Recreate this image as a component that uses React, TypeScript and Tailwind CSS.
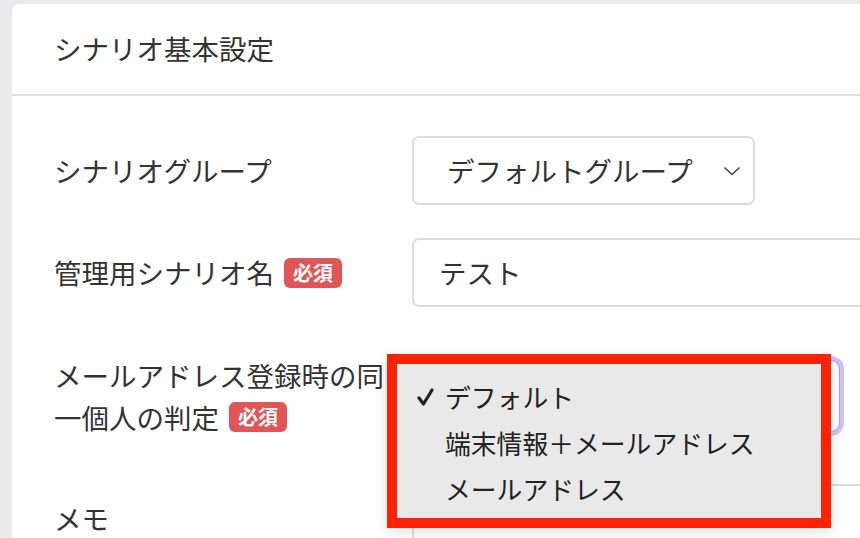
import React from "react";

const font = { fontFamily: '"Noto Sans CJK JP", "Noto Sans", sans-serif' };

function Badge() {
  return (
    <span className="ml-[10px] inline-flex h-[30px] items-center rounded-[6px] bg-[#e05555] px-[9px] text-[20px] font-bold leading-none text-white">
      必須
    </span>
  );
}

export default function App() {
  return (
    <div
      className="relative h-[538px] w-[860px] overflow-hidden bg-[#ebebee] pl-[12px] pt-[4px] text-[#333333]"
      style={font}
    >
      <div className="h-[620px] w-[900px] rounded-tl-[8px] bg-white">
        <div className="flex h-[92px] items-center border-b-2 border-[#dedee2] pl-[42px] text-[27.5px]">
          シナリオ基本設定
        </div>
        <div className="pl-[42px] pt-[40px]">
          {/* row 1 */}
          <div className="flex h-[69px] items-center">
            <div className="w-[358px] text-[27.5px]">シナリオグループ</div>
            <div className="flex h-[69px] w-[343px] items-center justify-between rounded-[7px] border-2 border-[#dcdce0] pl-[33px] pr-[12px] text-[27.5px]">
              <span>デフォルトグループ</span>
              <svg width="18" height="10" viewBox="0 0 18 10" fill="none">
                <path d="M1.5 1.5 L9 8.5 L16.5 1.5" stroke="#444" strokeWidth="1.6" />
              </svg>
            </div>
          </div>
          {/* row 2 */}
          <div className="mt-[33px] flex h-[69px] items-center">
            <div className="flex w-[358px] items-center text-[27.5px]">
              <span>管理用シナリオ名</span>
              <Badge />
            </div>
            <div className="flex h-[69px] w-[480px] items-center rounded-l-[7px] border-2 border-r-0 border-[#dcdce0] pl-[25px] text-[27.5px]">
              テスト
            </div>
          </div>
          {/* row 3 */}
          <div className="mt-[45px] flex h-[88px] items-center">
            <div className="flex w-[338px] flex-col text-[27.5px] leading-[42px]">
              <span>メールアドレス登録時の同</span>
              <div className="flex items-center">
                <span>一個人の判定</span>
                <Badge />
              </div>
            </div>
            <div className="ml-[20px] h-[72px] w-[428px] rounded-[9px] border border-[#a79df0] bg-white shadow-[0_0_0_4px_#cbc5f7]"></div>
          </div>
          {/* row 4 */}
          <div className="mt-[44px] flex items-start">
            <div className="w-[358px] pt-[13px] text-[27.5px] leading-[42px]">メモ</div>
            <div className="h-[120px] w-[480px] rounded-tl-[7px] border-2 border-r-0 border-b-0 border-[#dcdce0]"></div>
          </div>
        </div>
      </div>

      {/* dropdown menu with annotation frame */}
      <div className="absolute left-[387px] top-[354px] h-[174px] w-[444px] border-[10px] border-[#ff2200] bg-white shadow-[0_4px_14px_rgba(0,0,0,0.12)]">
        <div className="h-full w-full rounded-[6px] bg-[#e9e9e9] pt-[10px] text-[25.8px] text-[#222]">
          <div className="relative flex h-[46px] items-center pl-[48px]">
            <svg
              className="absolute left-[20px] top-[14px]"
              width="17"
              height="18"
              viewBox="0 0 17 18"
              fill="none"
            >
              <path d="M2 10 L6.5 16 L15 2" stroke="#222" strokeWidth="3.2" strokeLinecap="round" strokeLinejoin="round" />
            </svg>
            デフォルト
          </div>
          <div className="flex h-[46px] items-center pl-[48px]">端末情報＋メールアドレス</div>
          <div className="flex h-[46px] items-center pl-[48px]">メールアドレス</div>
        </div>
      </div>
    </div>
  );
}
